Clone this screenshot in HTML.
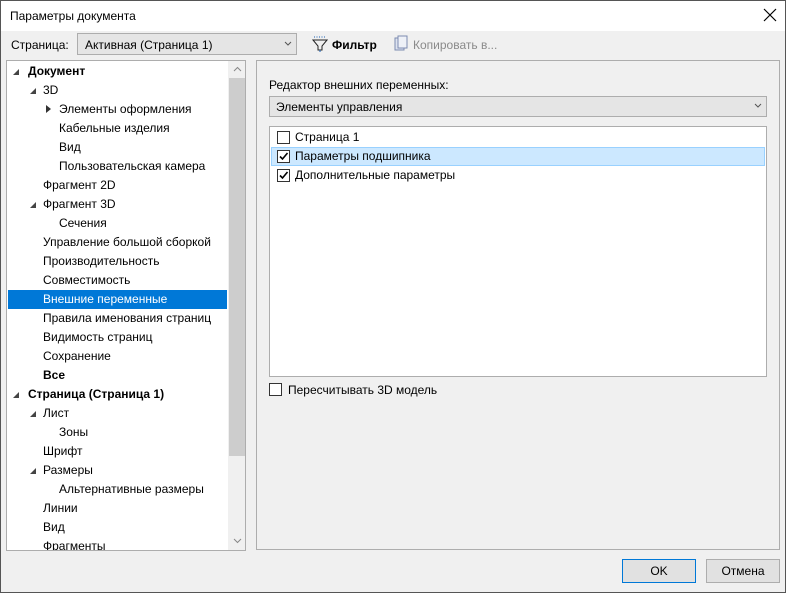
<!DOCTYPE html>
<html><head><meta charset="utf-8"><style>
*{margin:0;padding:0;box-sizing:border-box}
body{width:786px;height:593px;background:#f0f0f0;font-family:"Liberation Sans",sans-serif;font-size:12px;color:#000;position:relative;overflow:hidden}
.a{position:absolute;white-space:nowrap}
.frame{position:absolute;left:0;top:0;width:786px;height:593px;border:1px solid #555}
.title{position:absolute;left:1px;top:1px;width:784px;height:30px;background:#fff}
.tree{position:absolute;left:6px;top:60px;width:240px;height:491px;background:#fff;border:1px solid #adadad;overflow:hidden}
.ti{position:absolute;height:19px;line-height:19px;white-space:nowrap}
.tri{position:absolute;width:0;height:0}
.dn{border-left:6px solid transparent;border-bottom:6px solid #444}
.rt{border-top:4px solid transparent;border-bottom:4px solid transparent;border-left:5px solid #333}
.cb{position:absolute;width:13px;height:13px;border:1px solid #333;background:#fff}
.btn{position:absolute;height:24px;line-height:22px;text-align:center;background:#e1e1e1;border:1px solid #adadad}
</style></head><body>
<div class="frame"></div>
<div class="title"></div>
<div class="a" style="left:10px;top:9px;font-size:12px">Параметры документа</div>
<svg class="a" style="left:763px;top:8px" width="14" height="14"><path d="M1 1L13 13M13 1L1 13" stroke="#000" stroke-width="1.2"/></svg>

<div class="a" style="left:11px;top:38px">Страница:</div>
<div class="a" style="left:77px;top:33px;width:220px;height:22px;border:1px solid #adadad;background:#e5e5e5"></div>
<div class="a" style="left:85px;top:38px">Активная (Страница 1)</div>
<svg class="a" style="left:284px;top:41px" width="8" height="5"><path d="M1 1L4 4L7 1" stroke="#555" fill="none"/></svg>
<svg class="a" style="left:312px;top:35px" width="16" height="18"><path d="M2 2h12" stroke="#1a5fb4" stroke-dasharray="1 1.5"/><path d="M1 5h14l-5 6v4h-4v-4z" fill="none" stroke="#222"/><path d="M8 15v2" stroke="#1a5fb4"/></svg>
<div class="a" style="left:332px;top:38px;font-weight:bold;font-size:12px">Фильтр</div>
<svg class="a" style="left:394px;top:35px" width="14" height="17"><rect x="1" y="3" width="9" height="12" fill="#dde3ef" stroke="#7d8bb0"/><rect x="4" y="1" width="9" height="12" fill="#eef1f7" stroke="#7d8bb0"/></svg>
<div class="a" style="left:413px;top:38px;color:#8a8a8a">Копировать в...</div>

<div class="tree">
<div class="a" style="left:221px;top:0;width:17px;height:489px;background:#f0f0f0"></div>
<div class="a" style="left:222px;top:17px;width:16px;height:378px;background:#cdcdcd"></div>
<svg class="a" style="left:226px;top:5px" width="9" height="6"><path d="M1 5L4.5 1.5L8 5" stroke="#888" fill="none"/></svg>
<svg class="a" style="left:226px;top:477px" width="9" height="6"><path d="M1 1L4.5 4.5L8 1" stroke="#888" fill="none"/></svg>
<div class="a" style="left:1px;top:229px;width:219px;height:19px;background:#0078d7"></div>
</div>

<div style="position:absolute;left:7px;top:61px;width:220px;height:489px;overflow:hidden">
<div class="tri dn" style="left:6px;top:8px"></div><div class="ti" style="left:21px;top:1px;font-weight:bold">Документ</div>
<div class="tri dn" style="left:23px;top:27px"></div><div class="ti" style="left:36px;top:20px">3D</div>
<div class="tri rt" style="left:39px;top:44px"></div><div class="ti" style="left:52px;top:39px">Элементы оформления</div>
<div class="ti" style="left:52px;top:58px">Кабельные изделия</div>
<div class="ti" style="left:52px;top:77px">Вид</div>
<div class="ti" style="left:52px;top:96px">Пользовательская камера</div>
<div class="ti" style="left:36px;top:115px">Фрагмент 2D</div>
<div class="tri dn" style="left:23px;top:141px"></div><div class="ti" style="left:36px;top:134px">Фрагмент 3D</div>
<div class="ti" style="left:52px;top:153px">Сечения</div>
<div class="ti" style="left:36px;top:172px">Управление большой сборкой</div>
<div class="ti" style="left:36px;top:191px">Производительность</div>
<div class="ti" style="left:36px;top:210px">Совместимость</div>
<div class="ti" style="left:36px;top:229px;color:#fff">Внешние переменные</div>
<div class="ti" style="left:36px;top:248px">Правила именования страниц</div>
<div class="ti" style="left:36px;top:267px">Видимость страниц</div>
<div class="ti" style="left:36px;top:286px">Сохранение</div>
<div class="ti" style="left:36px;top:305px;font-weight:bold">Все</div>
<div class="tri dn" style="left:6px;top:331px"></div><div class="ti" style="left:21px;top:324px;font-weight:bold">Страница (Страница 1)</div>
<div class="tri dn" style="left:23px;top:350px"></div><div class="ti" style="left:36px;top:343px">Лист</div>
<div class="ti" style="left:52px;top:362px">Зоны</div>
<div class="ti" style="left:36px;top:381px">Шрифт</div>
<div class="tri dn" style="left:23px;top:407px"></div><div class="ti" style="left:36px;top:400px">Размеры</div>
<div class="ti" style="left:52px;top:419px">Альтернативные размеры</div>
<div class="ti" style="left:36px;top:438px">Линии</div>
<div class="ti" style="left:36px;top:457px">Вид</div>
<div class="ti" style="left:36px;top:476px">Фрагменты</div>
</div>

<div class="a" style="left:256px;top:60px;width:524px;height:490px;border:1px solid #adadad"></div>
<div class="a" style="left:269px;top:78px">Редактор внешних переменных:</div>
<div class="a" style="left:269px;top:96px;width:498px;height:21px;border:1px solid #adadad;background:#e5e5e5"></div>
<div class="a" style="left:276px;top:100px">Элементы управления</div>
<svg class="a" style="left:754px;top:103px" width="8" height="5"><path d="M1 1L4 4L7 1" stroke="#555" fill="none"/></svg>
<div class="a" style="left:269px;top:126px;width:498px;height:251px;border:1px solid #adadad;background:#fff"></div>
<div class="a" style="left:271px;top:147px;width:494px;height:19px;background:#cce8ff;border:1px solid #99d1ff"></div>
<div class="cb" style="left:277px;top:131px"></div><div class="a" style="left:295px;top:130px">Страница 1</div>
<div class="cb" style="left:277px;top:150px"></div><div class="a" style="left:295px;top:149px">Параметры подшипника</div>
<div class="cb" style="left:277px;top:169px"></div><div class="a" style="left:295px;top:168px">Дополнительные параметры</div>
<svg class="a" style="left:278px;top:151px" width="11" height="11"><path d="M2 5.5L4.5 8L9.5 2" stroke="#000" stroke-width="1.6" fill="none"/></svg>
<svg class="a" style="left:278px;top:170px" width="11" height="11"><path d="M2 5.5L4.5 8L9.5 2" stroke="#000" stroke-width="1.6" fill="none"/></svg>
<div class="cb" style="left:269px;top:383px"></div><div class="a" style="left:288px;top:383px">Пересчитывать 3D модель</div>

<div class="btn" style="left:622px;top:559px;width:74px;border:1px solid #0078d7">OK</div>
<div class="btn" style="left:706px;top:559px;width:74px">Отмена</div>
</body></html>
